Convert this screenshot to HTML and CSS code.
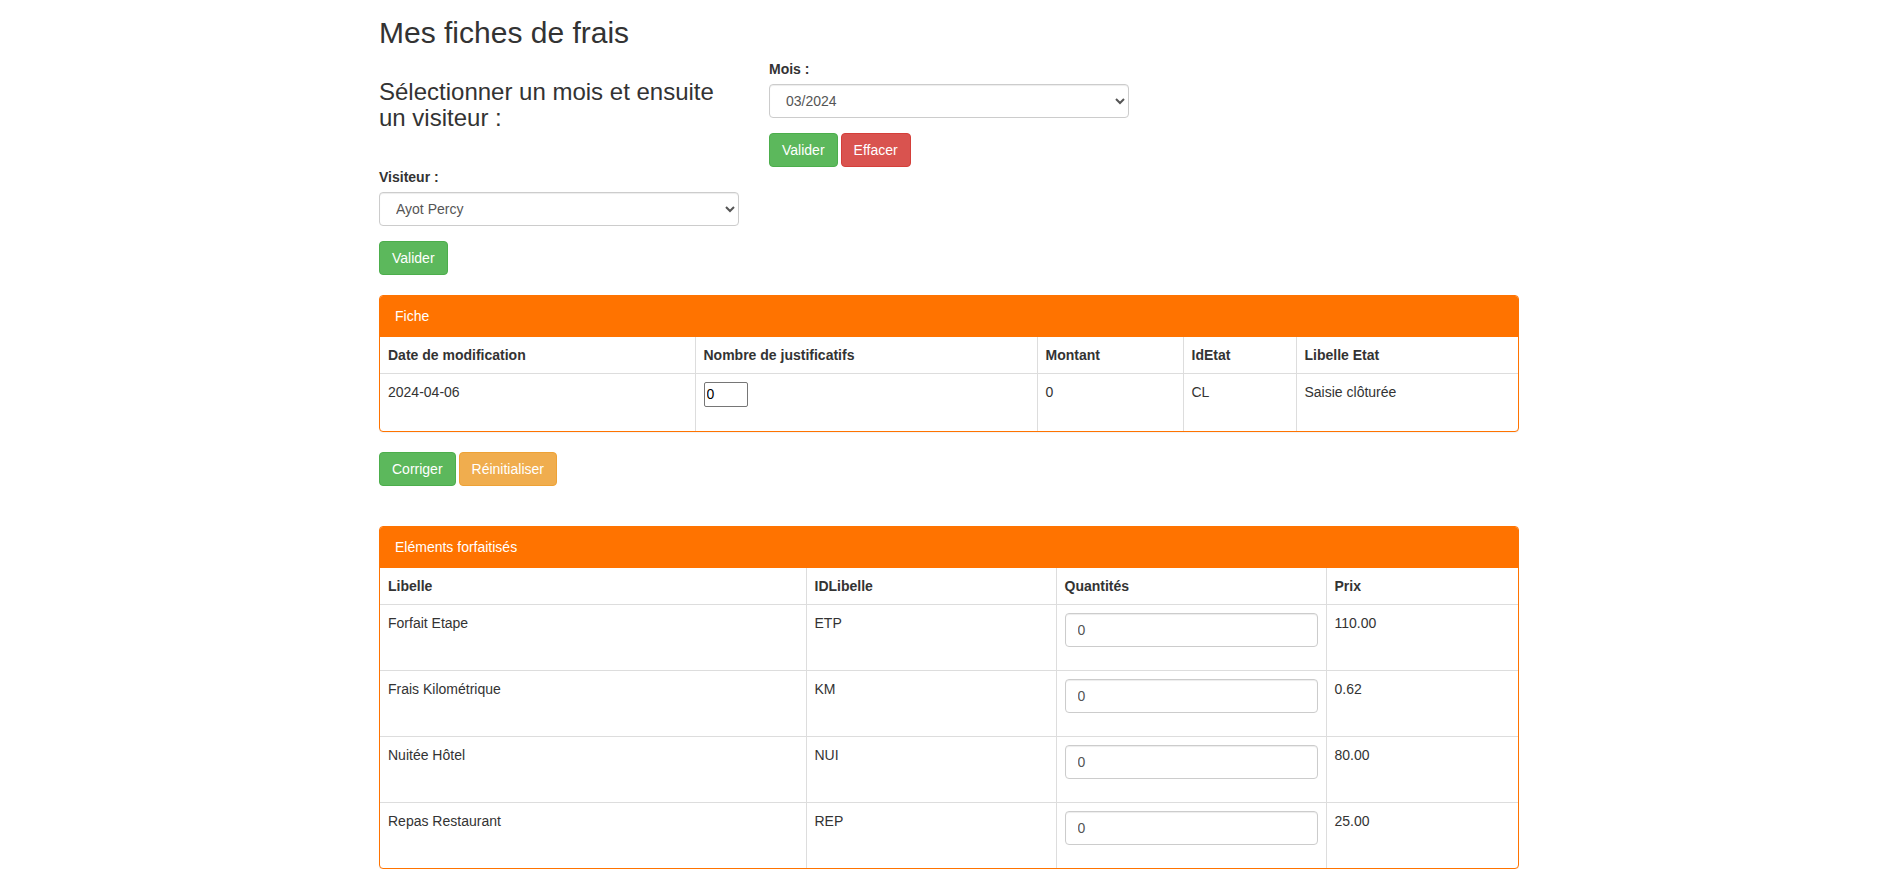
FILE: index.html
```html
<!DOCTYPE html>
<html lang="fr">
<head>
<meta charset="utf-8">
<title>Mes fiches de frais</title>
<link rel="stylesheet" href="styles.css">
</head>
<body>
<div class="container">
  <h2 class="page-title">Mes fiches de frais</h2>
  <div class="row">
    <div class="col">
      <h3 class="subtitle">Sélectionner un mois et ensuite un visiteur :</h3>
      <form class="visitor-form">
        <div class="form-group">
          <label class="lbl" for="lstVisiteur">Visiteur :</label>
          <select id="lstVisiteur" class="form-control">
            <option>Ayot Percy</option>
          </select>
        </div>
        <button type="button" class="btn btn-success">Valider</button>
      </form>
    </div>
    <div class="col">
      <form>
        <div class="form-group">
          <label class="lbl" for="lstMois">Mois :</label>
          <select id="lstMois" class="form-control">
            <option>03/2024</option>
          </select>
        </div>
        <div class="btn-line">
          <button type="button" class="btn btn-success">Valider</button>
          <button type="button" class="btn btn-danger">Effacer</button>
        </div>
      </form>
    </div>
  </div>

  <div class="panel panel-fiche">
    <div class="panel-heading">Fiche</div>
    <table class="table">
      <colgroup>
        <col class="f-c1"><col class="f-c2"><col class="f-c3"><col class="f-c4"><col>
      </colgroup>
      <thead>
        <tr>
          <th>Date de modification</th>
          <th>Nombre de justificatifs</th>
          <th>Montant</th>
          <th>IdEtat</th>
          <th>Libelle Etat</th>
        </tr>
      </thead>
      <tbody>
        <tr>
          <td>2024-04-06</td>
          <td><div class="form-group fg-fiche"><input class="nb-input" type="number" value="0"></div></td>
          <td>0</td>
          <td>CL</td>
          <td>Saisie clôturée</td>
        </tr>
      </tbody>
    </table>
  </div>

  <div class="btn-line actions">
    <button type="button" class="btn btn-success">Corriger</button>
    <button type="button" class="btn btn-warning">Réinitialiser</button>
  </div>

  <div class="panel panel-elements">
    <div class="panel-heading">Eléments forfaitisés</div>
    <table class="table">
      <colgroup>
        <col class="e-c1"><col class="e-c2"><col class="e-c3"><col>
      </colgroup>
      <thead>
        <tr>
          <th>Libelle</th>
          <th>IDLibelle</th>
          <th>Quantités</th>
          <th>Prix</th>
        </tr>
      </thead>
      <tbody>
        <tr>
          <td>Forfait Etape</td>
          <td>ETP</td>
          <td><div class="form-group"><input class="form-control" type="text" value="0"></div></td>
          <td>110.00</td>
        </tr>
        <tr>
          <td>Frais Kilométrique</td>
          <td>KM</td>
          <td><div class="form-group"><input class="form-control" type="text" value="0"></div></td>
          <td>0.62</td>
        </tr>
        <tr>
          <td>Nuitée Hôtel</td>
          <td>NUI</td>
          <td><div class="form-group"><input class="form-control" type="text" value="0"></div></td>
          <td>80.00</td>
        </tr>
        <tr>
          <td>Repas Restaurant</td>
          <td>REP</td>
          <td><div class="form-group"><input class="form-control" type="text" value="0"></div></td>
          <td>25.00</td>
        </tr>
      </tbody>
    </table>
  </div>
</div>
</body>
</html>
```

FILE: styles.css
```css
* {
  box-sizing: border-box;
}

html, body {
  margin: 0;
  padding: 0;
}

body {
  font-family: "Liberation Sans", Arial, Helvetica, sans-serif;
  font-size: 14px;
  line-height: 1.42857143;
  color: #333;
  background: #fff;
  padding-left: 4px;
}

.container {
  width: 1170px;
  margin: 0 auto;
  padding: 0 15px;
}

.page-title {
  font-size: 30px;
  font-weight: 500;
  line-height: 1.1;
  margin: 16px 0 10px;
}

.row {
  display: flex;
  margin: 0 -15px;
}

.col {
  width: 390px;
  padding: 0 15px;
}

.subtitle {
  font-size: 24px;
  font-weight: 500;
  line-height: 1.1;
  margin: 20px 0 10px;
}

.visitor-form {
  margin-top: 35px;
}

form {
  margin: 0;
}

.form-group {
  margin-bottom: 15px;
}

.fg-fiche {
  margin-bottom: 16px;
}

.lbl {
  display: inline-block;
  max-width: 100%;
  margin-bottom: 5px;
  font-weight: 700;
}

.form-control {
  display: block;
  width: 100%;
  height: 34px;
  padding: 6px 12px;
  font-family: inherit;
  font-size: 14px;
  line-height: 1.42857143;
  color: #555;
  background-color: #fff;
  border: 1px solid #ccc;
  border-radius: 4px;
  box-shadow: inset 0 1px 1px rgba(0, 0, 0, .075);
}

.btn-line {
  display: flex;
  gap: 3px;
}

.btn {
  display: inline-block;
  padding: 6px 12px;
  margin: 0;
  font-family: inherit;
  font-size: 14px;
  font-weight: 400;
  line-height: 1.42857143;
  text-align: center;
  white-space: nowrap;
  border: 1px solid transparent;
  border-radius: 4px;
  color: #fff;
  cursor: pointer;
}

.btn-success {
  background-color: #5cb85c;
  border-color: #4cae4c;
}

.btn-danger {
  background-color: #d9534f;
  border-color: #d43f3a;
}

.btn-warning {
  background-color: #f0ad4e;
  border-color: #eea236;
}

.panel {
  margin-top: 20px;
  margin-bottom: 20px;
  background-color: #fff;
  border: 1px solid #ff7300;
  border-radius: 4px;
  box-shadow: 0 1px 1px rgba(0, 0, 0, .05);
  overflow: hidden;
}

.panel-elements {
  margin-top: 40px;
  margin-bottom: 0;
}

.panel-heading {
  padding: 10px 15px;
  background-color: #ff7300;
  color: #fff;
  border-bottom: 1px solid #ff7300;
}

.table {
  width: 100%;
  border-collapse: collapse;
  border-spacing: 0;
  table-layout: fixed;
}

.table th,
.table td {
  padding: 8px;
  line-height: 1.42857143;
  vertical-align: top;
  text-align: left;
  border: 1px solid #ddd;
}

.table th {
  vertical-align: bottom;
  font-weight: 700;
}

.table tr > :first-child {
  border-left: 0;
}

.table tr > :last-child {
  border-right: 0;
}

.table thead tr:first-child > * {
  border-top: 0;
}

.table tbody tr:last-child > * {
  border-bottom: 0;
}

.f-c1 { width: 315px; }
.f-c2 { width: 342px; }
.f-c3 { width: 146px; }
.f-c4 { width: 113px; }

.e-c1 { width: 426px; }
.e-c2 { width: 250px; }
.e-c3 { width: 270px; }

.nb-input {
  display: block;
  width: 44px;
  height: 25px;
  font-family: inherit;
  font-size: 14px;
  line-height: inherit;
  padding: 1px 2px;
  border: 1px solid #767676;
  border-radius: 2px;
  color: #000;
  background: #fff;
}
```
